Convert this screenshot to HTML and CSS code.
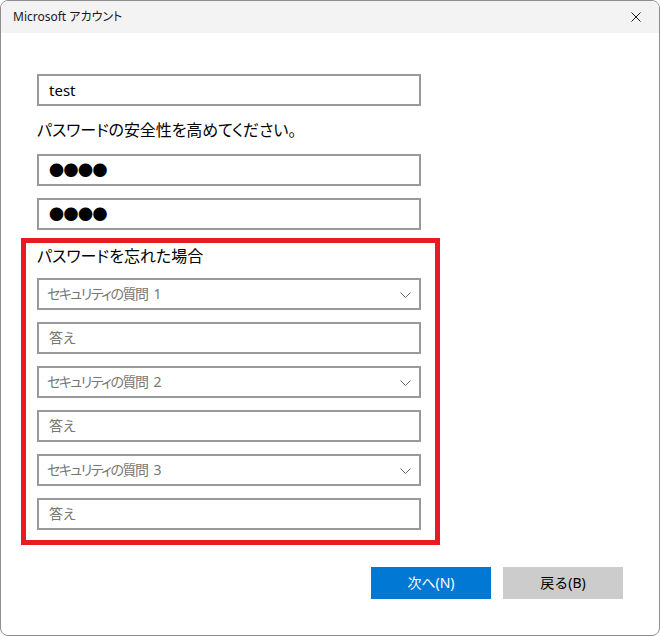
FILE: index.html
```html
<!DOCTYPE html>
<html lang="ja">
<head>
<meta charset="utf-8">
<title>Microsoft アカウント</title>
<link rel="stylesheet" href="styles.css">
</head>
<body>
<div class="window">
  <div class="titlebar">
    <span class="title">Microsoft アカウント</span>
    <svg class="close" width="10" height="10" viewBox="0 0 10 10" aria-label="閉じる">
      <path d="M0.5 0.5 L9.5 9.5 M9.5 0.5 L0.5 9.5" stroke="#1b1b1b" stroke-width="1" fill="none"/>
    </svg>
  </div>
  <div class="content">
    <div class="field first"><span class="value">test</span></div>
    <p class="label strength">パスワードの安全性を高めてください。</p>
    <div class="field"><span class="dots">●●●●</span></div>
    <div class="field gap"><span class="dots">●●●●</span></div>

    <div class="recovery">
      <p class="label recovery-title">パスワードを忘れた場合</p>
      <div class="field select"><span class="placeholder question">セキュリティの質問 1</span><svg class="chev" width="11" height="6" viewBox="0 0 11 6"><path d="M0.5 0.5 L5.5 5.5 L10.5 0.5" stroke="#666" stroke-width="1" fill="none"/></svg></div>
      <div class="field gap"><span class="placeholder">答え</span></div>
      <div class="field select gap"><span class="placeholder question">セキュリティの質問 2</span><svg class="chev" width="11" height="6" viewBox="0 0 11 6"><path d="M0.5 0.5 L5.5 5.5 L10.5 0.5" stroke="#666" stroke-width="1" fill="none"/></svg></div>
      <div class="field gap"><span class="placeholder">答え</span></div>
      <div class="field select gap"><span class="placeholder question">セキュリティの質問 3</span><svg class="chev" width="11" height="6" viewBox="0 0 11 6"><path d="M0.5 0.5 L5.5 5.5 L10.5 0.5" stroke="#666" stroke-width="1" fill="none"/></svg></div>
      <div class="field gap"><span class="placeholder">答え</span></div>
    </div>

    <div class="actions">
      <button class="btn primary">次へ(N)</button>
      <button class="btn secondary">戻る(B)</button>
    </div>
  </div>
</div>
</body>
</html>
```

FILE: styles.css
```css
* { box-sizing: border-box; }

html, body {
  margin: 0;
  padding: 0;
  background: #ffffff;
}

body {
  font-family: "Noto Sans", "Noto Sans CJK JP", sans-serif;
  font-feature-settings: "palt";
  color: #000;
}

.window {
  width: 660px;
  height: 636px;
  border: 1px solid #8e8e8e;
  border-radius: 8px;
  overflow: hidden;
  background: #ffffff;
  display: flex;
  flex-direction: column;
}

.titlebar {
  height: 32px;
  flex: none;
  background: #f3f3f3;
  display: flex;
  align-items: center;
  justify-content: space-between;
  padding: 0 18px 0 12px;
}

.title {
  font-size: 12px;
  color: #1a1a1a;
  line-height: 16px;
}

.close { display: block; }

.content {
  display: flex;
  flex-direction: column;
  padding: 0 36px;
}

.field {
  width: 384px;
  height: 32px;
  border: 2px solid #999999;
  background: #fff;
  display: flex;
  align-items: center;
  padding: 0 8px 0 10px;
  font-size: 15px;
}

.field.first { margin-top: 41px; }
.field.gap { margin-top: 12px; }

.value { color: #000; line-height: 20px; }

.dots {
  font-family: "Noto Sans CJK JP", sans-serif;
  font-feature-settings: normal;
  font-size: 15px;
  line-height: 20px;
  letter-spacing: -0.5px;
  color: #000;
}

.placeholder {
  color: #777777;
  font-size: 14px;
  line-height: 20px;
}

.question {
  letter-spacing: -1.5px;
  word-spacing: 4px;
  margin-left: -2px;
}

.select { justify-content: space-between; }
.chev { display: block; margin-top: 1px; }

.label {
  margin: 0;
  font-size: 16px;
  line-height: 24px;
  height: 24px;
  color: #000;
}

.strength { margin: 12px 0; letter-spacing: -0.1px; }

.recovery {
  margin: 8px 0 0 -16px;
  width: 419px;
  border: 5px solid #e81b23;
  padding: 1px 0 10px 11px;
  display: flex;
  flex-direction: column;
}

.recovery-title { margin-bottom: 10px; }

.actions {
  margin-top: 22px;
  display: flex;
  justify-content: flex-end;
  gap: 12px;
}

.btn {
  width: 120px;
  height: 32px;
  border: none;
  border-radius: 0;
  font-family: "Noto Sans", "Noto Sans CJK JP", sans-serif;
  font-size: 14px;
  padding: 0;
  line-height: 20px;
}

.primary { background: #0078d4; color: #fff; }
.secondary { background: #cccccc; color: #000; }
```
